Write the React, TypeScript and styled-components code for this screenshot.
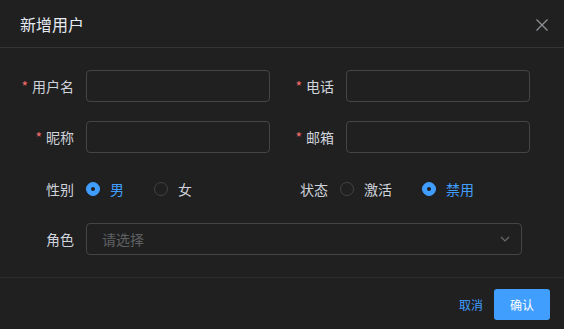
import React from "react";
import styled, { createGlobalStyle } from "styled-components";

const Global = createGlobalStyle`
  html, body { margin: 0; padding: 0; background: #202020; }
  body { font-family: "Noto Sans CJK SC", "Noto Sans", sans-serif; }
`;

const Dialog = styled.div`
  width: 564px;
  height: 329px;
  background: #202020;
  display: flex;
  flex-direction: column;
  box-sizing: border-box;
`;

const Header = styled.div`
  height: 47px;
  border-bottom: 1px solid #343434;
  display: flex;
  align-items: center;
  justify-content: space-between;
  padding: 0 13px 0 20px;
  box-sizing: content-box;
`;

const Title = styled.div`
  font-size: 16px;
  color: #e5eaf3;
  line-height: 22px;
  margin-top: 1px;
`;

const Close = styled.button`
  width: 18px;
  height: 18px;
  padding: 0;
  border: none;
  background: none;
  display: flex;
  align-items: center;
  justify-content: center;
  margin-top: 2px;
`;

const Body = styled.div`
  flex: 1;
  padding-top: 22px;
  display: flex;
  flex-direction: column;
`;

const Row = styled.div<{ $mb: number }>`
  display: flex;
  align-items: center;
  height: 32px;
  margin-bottom: ${(p) => p.$mb}px;
`;

const Label = styled.label<{ $w: number }>`
  width: ${(p) => p.$w}px;
  padding-right: 12px;
  display: flex;
  justify-content: flex-end;
  align-items: center;
  font-size: 14px;
  color: #cfd3dc;
  box-sizing: border-box;
  flex-shrink: 0;
`;

const Star = styled.span`
  color: #f56c6c;
  margin-right: 4px;
  font-size: 14px;
`;

const Input = styled.div<{ $w: number }>`
  width: ${(p) => p.$w}px;
  height: 32px;
  border: 1px solid #454545;
  border-radius: 4px;
  box-sizing: border-box;
  flex-shrink: 0;
`;

const Select = styled.div<{ $w: number }>`
  width: ${(p) => p.$w}px;
  height: 32px;
  border: 1px solid #454545;
  border-radius: 4px;
  box-sizing: border-box;
  display: flex;
  align-items: center;
  justify-content: space-between;
  padding: 0 10px 0 15px;
  font-size: 14px;
  color: #5f6064;
`;

const RadioGroup = styled.div<{ $w: number }>`
  width: ${(p) => p.$w}px;
  display: flex;
  align-items: center;
  flex-shrink: 0;
`;

const RadioItem = styled.div<{ $checked: boolean }>`
  display: flex;
  align-items: center;
  margin-right: 30px;
  font-size: 14px;
  color: ${(p) => (p.$checked ? "#409eff" : "#cfd3dc")};
`;

const RadioCircle = styled.span<{ $checked: boolean }>`
  width: 14px;
  height: 14px;
  border-radius: 50%;
  box-sizing: border-box;
  margin-right: 10px;
  border: 1px solid ${(p) => (p.$checked ? "#409eff" : "#434343")};
  background: ${(p) => (p.$checked ? "#409eff" : "transparent")};
  display: flex;
  align-items: center;
  justify-content: center;
  &::after {
    content: "";
    width: 4px;
    height: 4px;
    border-radius: 50%;
    background: ${(p) => (p.$checked ? "#202020" : "transparent")};
  }
`;

const Footer = styled.div`
  height: 51px;
  border-top: 1px solid #2b2b2b;
  display: flex;
  align-items: center;
  justify-content: flex-end;
  padding: 0 14px 0 0;
`;

const TextButton = styled.button`
  border: none;
  background: none;
  color: #409eff;
  font-family: inherit;
  font-size: 12px;
  padding: 0;
  margin-right: 11px;
  margin-top: 2px;
`;

const PrimaryButton = styled.button`
  width: 56px;
  height: 31px;
  border: none;
  border-radius: 3px;
  background: #409eff;
  color: #ffffff;
  font-family: inherit;
  font-size: 12px;
  margin-top: 2px;
`;

function Radio({ checked, label }: { checked: boolean; label: string }) {
  return (
    <RadioItem $checked={checked}>
      <RadioCircle $checked={checked} />
      {label}
    </RadioItem>
  );
}

export default function App() {
  return (
    <>
      <Global />
      <Dialog>
        <Header>
          <Title>新增用户</Title>
          <Close aria-label="close">
            <svg width="12" height="12" viewBox="0 0 12 12">
              <path d="M0.5 0.5 L11.5 11.5 M11.5 0.5 L0.5 11.5" stroke="#8d9095" strokeWidth="1.3" fill="none" />
            </svg>
          </Close>
        </Header>
        <Body>
          <Row $mb={19}>
            <Label $w={86}><Star>*</Star>用户名</Label>
            <Input $w={184} />
            <Label $w={76}><Star>*</Star>电话</Label>
            <Input $w={184} />
          </Row>
          <Row $mb={20}>
            <Label $w={86}><Star>*</Star>昵称</Label>
            <Input $w={184} />
            <Label $w={76}><Star>*</Star>邮箱</Label>
            <Input $w={184} />
          </Row>
          <Row $mb={18}>
            <Label $w={86}>性别</Label>
            <RadioGroup $w={184}>
              <Radio checked label="男" />
              <Radio checked={false} label="女" />
            </RadioGroup>
            <Label $w={70}>状态</Label>
            <RadioGroup $w={190}>
              <Radio checked={false} label="激活" />
              <Radio checked label="禁用" />
            </RadioGroup>
          </Row>
          <Row $mb={0}>
            <Label $w={86}>角色</Label>
            <Select $w={436}>
              <span>请选择</span>
              <svg width="12" height="12" viewBox="0 0 12 12">
                <path d="M2 4 L6 8 L10 4" stroke="#6a6b6e" strokeWidth="1.2" fill="none" />
              </svg>
            </Select>
          </Row>
        </Body>
        <Footer>
          <TextButton>取消</TextButton>
          <PrimaryButton>确认</PrimaryButton>
        </Footer>
      </Dialog>
    </>
  );
}
